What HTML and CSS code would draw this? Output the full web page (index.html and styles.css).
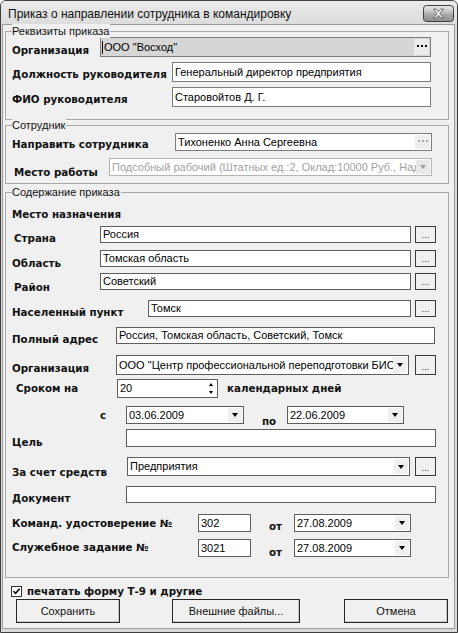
FILE: index.html
```html
<!DOCTYPE html>
<html lang="ru">
<head>
<meta charset="utf-8">
<title>Приказ о направлении сотрудника в командировку</title>
<link rel="stylesheet" href="styles.css">
</head>
<body>
<div class="window">
  <div class="titlebar">
    <span class="title">Приказ о направлении сотрудника в командировку</span>
    <span class="close">
      <svg width="31" height="17" viewBox="0 0 31 17">
        <defs>
          <linearGradient id="cg" x1="0" y1="0" x2="0" y2="1">
            <stop offset="0" stop-color="#ececec"/>
            <stop offset="0.45" stop-color="#bdbdbd"/>
            <stop offset="0.55" stop-color="#a9a9a9"/>
            <stop offset="1" stop-color="#8f8f8f"/>
          </linearGradient>
        </defs>
        <rect x="0.5" y="0.5" width="30" height="16" rx="3" fill="url(#cg)" stroke="#3c3c3c"/>
        <path d="M10.5 4 L13 4 L15.5 6.8 L18 4 L20.5 4 L16.8 8.5 L20.5 13 L18 13 L15.5 10.2 L13 13 L10.5 13 L14.2 8.5 Z" fill="#ffffff" stroke="#4a4a4a" stroke-width="0.8"/>
      </svg>
    </span>
  </div>
  <div class="client">
    <div class="group g1">
      <span class="legend">Реквизиты приказа</span>
      <div class="row h20 mt5">
        <span class="lbl w88 pt7">Организация</span>
        <div class="field readonly fw331"><span class="val">ООО "Восход"</span><span class="inbtn"><svg width="10" height="2" viewBox="0 0 10 2"><rect x="0" y="0" width="2" height="2"/><rect x="4" y="0" width="2" height="2"/><rect x="8" y="0" width="2" height="2"/></svg></span></div>
      </div>
      <div class="row h20 mt5">
        <span class="lbl w160 pt5">Должность руководителя</span>
        <div class="field fw259"><span class="val">Генеральный директор предприятия</span></div>
      </div>
      <div class="row h20 mt5">
        <span class="lbl w160 pt4">ФИО руководителя</span>
        <div class="field fw259"><span class="val">Старовойтов Д. Г.</span></div>
      </div>
    </div>

    <div class="group g2">
      <span class="legend">Сотрудник</span>
      <div class="row h18 mt7">
        <span class="lbl w163 pt5">Направить сотрудника</span>
        <div class="field fw257"><span class="val">Тихоненко Анна Сергеевна</span><span class="inbtn faint"><svg width="10" height="2" viewBox="0 0 10 2"><rect x="0" y="0" width="2" height="2"/><rect x="4" y="0" width="2" height="2"/><rect x="8" y="0" width="2" height="2"/></svg></span></div>
      </div>
      <div class="row h18 mt7">
        <span class="lbl w97 in2 pt10">Место работы</span>
        <div class="field disabled fw323"><span class="val">Подсобный рабочий (Штатных ед.:2, Оклад:10000 Руб., Над</span><span class="arrow"><span class="tri"></span></span></div>
      </div>
    </div>

    <div class="group g3">
      <span class="legend">Содержание приказа</span>
      <div class="row h16 mt13">
        <span class="lbl">Место назначения</span>
      </div>
      <div class="row h17 mt4">
        <span class="lbl w88 in2 pt7">Страна</span>
        <div class="field dark fw311"><span class="val">Россия</span></div>
        <span class="dots ml4">...</span>
      </div>
      <div class="row h17 mt7">
        <span class="lbl w88 pt9">Область</span>
        <div class="field dark fw311"><span class="val">Томская область</span></div>
        <span class="dots ml4">...</span>
      </div>
      <div class="row h17 mt6">
        <span class="lbl w88 in2 pt11">Район</span>
        <div class="field dark fw311"><span class="val">Советский</span></div>
        <span class="dots ml4">...</span>
      </div>
      <div class="row h17 mt10">
        <span class="lbl w136 pt7">Населенный пункт</span>
        <div class="field dark fw263"><span class="val">Томск</span></div>
        <span class="dots ml4">...</span>
      </div>
      <div class="row h17 mt10">
        <span class="lbl w104 pt7">Полный адрес</span>
        <div class="field dark fw319"><span class="val">Россия, Томская область, Советский, Томск</span></div>
      </div>
      <div class="row h20 mt11">
        <span class="lbl w104 pt6">Организация</span>
        <div class="field dark fw293"><span class="val">ООО "Центр профессиональной переподготовки БИС</span><span class="arrow"><span class="tri"></span></span></div>
        <span class="dots ml6">...</span>
      </div>
      <div class="row h19 mt4">
        <span class="lbl w105 in4">Сроком на</span>
        <div class="field dark fw101"><span class="val">20</span><span class="spin"><span class="tri-up"></span><span class="tri-dn"></span></span></div>
        <span class="lbl ml9">календарных дней</span>
      </div>
      <div class="row h18 mt8">
        <span class="lbl lbl-c">с</span>
        <div class="field dark fw118"><span class="val">03.06.2009</span><span class="arrow"><span class="tri"></span></span></div>
        <span class="lbl lbl-mid pt12">по</span>
        <div class="field dark fw117"><span class="val">22.06.2009</span><span class="arrow"><span class="tri"></span></span></div>
      </div>
      <div class="row h18 mt5">
        <span class="lbl w114 pt8">Цель</span>
        <div class="field dark fw310"><span class="val"></span></div>
      </div>
      <div class="row h19 mt10">
        <span class="lbl w115 pt11">За счет средств</span>
        <div class="field dark fw283"><span class="val">Предприятия</span><span class="arrow"><span class="tri"></span></span></div>
        <span class="dots ml5">...</span>
      </div>
      <div class="row h17 mt10">
        <span class="lbl w114 pt7">Документ</span>
        <div class="field dark fw310"><span class="val"></span></div>
      </div>
      <div class="row h18 mt11">
        <span class="lbl w186">Команд. удостоверение №</span>
        <div class="field dark fw53"><span class="val">302</span></div>
        <span class="lbl lbl-mid pt6">от</span>
        <div class="field dark fw117"><span class="val">27.08.2009</span><span class="arrow"><span class="tri"></span></span></div>
      </div>
      <div class="row h18 mt7">
        <span class="lbl w186 pb2">Служебное задание №</span>
        <div class="field dark fw53"><span class="val">3021</span></div>
        <span class="lbl lbl-mid pt8">от</span>
        <div class="field dark fw117"><span class="val">27.08.2009</span><span class="arrow"><span class="tri"></span></span></div>
      </div>
    </div>

    <div class="checkrow">
      <span class="checkbox"><svg width="9" height="9" viewBox="0 0 9 9"><path d="M1.5 4.2 L3.6 6.4 L7.6 1.8" fill="none" stroke="#000" stroke-width="1.6"/></svg></span>
      <span class="lbl">печатать форму Т-9 и другие</span>
    </div>

    <div class="buttons">
      <span class="btn bw104">Сохранить</span>
      <span class="btn bw128 gap52">Внешние файлы...</span>
      <span class="btn bw104 gap44">Отмена</span>
    </div>
  </div>
</div>
</body>
</html>
```

FILE: styles.css
```css
* { box-sizing: border-box; }
html, body { margin: 0; padding: 0; }
body {
  background: #ffffff;
  font-family: "Liberation Sans", Arial, sans-serif;
  font-size: 11px;
  color: #000;
}

.window {
  width: 458px;
  height: 633px;
  border: 1px solid #3f3f3f;
  border-radius: 6px 6px 0 0;
  background: #d8d8d8;
  display: flex;
  flex-direction: column;
  overflow: hidden;
}

.titlebar {
  height: 23px;
  flex: none;
  display: flex;
  align-items: center;
  padding: 0 3px 0 7px;
  background: linear-gradient(#ebebeb, #dcdcdc);
}
.title {
  flex: 1;
  font-size: 12px;
  color: #111;
  padding-top: 2px;
}
.close { display: flex; margin-top: 1px; }

.client {
  flex: 1;
  margin: 0 2px 3px 1px;
  background: #f0f0f0;
  border: 1px solid #9c9c9c;
  display: flex;
  flex-direction: column;
}

.group {
  position: relative;
  width: 444px;
  margin-left: 2px;
  border: 1px solid #a7a7a7;
  padding-left: 6px;
}
.g1 { margin-top: 6px; padding-bottom: 12px; }
.g2 { margin-top: 5px; padding-bottom: 7px; }
.g3 { margin-top: 8px; padding-bottom: 20px; }

.legend {
  position: absolute;
  top: -8px;
  left: 6px;
  line-height: 14px;
  font-size: 11px;
  background: #f0f0f0;
  padding-right: 1px;
  color: #111;
}

.row { display: flex; align-items: center; }
.h16 { height: 16px; }
.h17 { height: 17px; }
.h18 { height: 18px; }
.h19 { height: 19px; }
.h20 { height: 20px; }
.mt4 { margin-top: 4px; }
.mt5 { margin-top: 5px; }
.mt6 { margin-top: 6px; }
.mt7 { margin-top: 7px; }
.mt8 { margin-top: 8px; }
.mt10 { margin-top: 10px; }
.mt11 { margin-top: 11px; }
.mt13 { margin-top: 13px; }

.lbl {
  flex: none;
  font-family: "DejaVu Sans", Verdana, sans-serif;
  font-weight: bold;
  font-size: 10.3px;
  line-height: 13px;
  white-space: nowrap;
  color: #111;
}
.w88 { width: 88px; }
.w97 { width: 97px; }
.w104 { width: 104px; }
.w105 { width: 105px; }
.w114 { width: 114px; }
.w115 { width: 115px; }
.w136 { width: 136px; }
.w160 { width: 160px; }
.w163 { width: 163px; }
.w186 { width: 186px; }
.in2 { padding-left: 2px; }
.in4 { padding-left: 4px; }
.pt4 { padding-top: 4px; }
.pt5 { padding-top: 5px; }
.pt6 { padding-top: 6px; }
.pt7 { padding-top: 7px; }
.pt8 { padding-top: 8px; }
.pt9 { padding-top: 9px; }
.pt10 { padding-top: 10px; }
.pt11 { padding-top: 11px; }
.pt12 { padding-top: 12px; }
.pb2 { padding-bottom: 2px; }
.ml4 { margin-left: 4px; }
.ml5 { margin-left: 5px; }
.ml6 { margin-left: 6px; }
.ml9 { margin-left: 9px; }
.lbl-c { width: 114px; padding-left: 88px; }
.lbl-mid { width: 43px; padding-left: 18px; }

.field {
  flex: none;
  height: 100%;
  display: flex;
  align-items: center;
  border: 1px solid #7c7c7c;
  background: #ffffff;
  padding-left: 2px;
  font-size: 11px;
  white-space: nowrap;
  overflow: hidden;
}
.field.dark { border-color: #5e5e5e; }
.field.readonly { background: #d6d6d6; padding-left: 1px; }
.field.readonly .val { border-left: 1px solid #000; padding-left: 1px; }
.field.disabled { border-color: #b4b4b4; color: #a2a2a2; }
.val {
  flex: 1;
  overflow: hidden;
  padding-bottom: 1px;
}

.fw53 { width: 53px; }
.fw101 { width: 101px; }
.fw117 { width: 117px; }
.fw118 { width: 118px; }
.fw257 { width: 257px; }
.fw259 { width: 259px; }
.fw263 { width: 263px; }
.fw283 { width: 283px; }
.fw293 { width: 293px; }
.fw310 { width: 310px; }
.fw311 { width: 311px; }
.fw319 { width: 319px; }
.fw323 { width: 323px; }
.fw331 { width: 331px; }

.inbtn {
  flex: none;
  width: 15px;
  align-self: stretch;
  margin: 1px 1px 1px 0;
  background: #ebebeb;
  display: flex;
  align-items: center;
  justify-content: center;
  padding-bottom: 3px;
}
.inbtn svg { fill: #000; }
.inbtn.faint { background: #eeeeee; }
.inbtn.faint svg { fill: #a8a8a8; }

.arrow {
  flex: none;
  width: 14px;
  align-self: stretch;
  margin: 1px 1px 1px 0;
  background: #f0f0f0;
  display: flex;
  align-items: center;
  justify-content: center;
}
.tri {
  width: 0;
  height: 0;
  border-left: 3.5px solid transparent;
  border-right: 3.5px solid transparent;
  border-top: 4px solid #000;
}
.disabled .arrow { background: #e8e8e8; }
.disabled .tri { border-top-color: #a0a0a0; }

.spin {
  flex: none;
  width: 13px;
  align-self: stretch;
  display: flex;
  flex-direction: column;
  align-items: center;
  justify-content: center;
  gap: 5px;
}
.tri-up {
  width: 0; height: 0;
  border-left: 2.5px solid transparent;
  border-right: 2.5px solid transparent;
  border-bottom: 3px solid #000;
}
.tri-dn {
  width: 0; height: 0;
  border-left: 2.5px solid transparent;
  border-right: 2.5px solid transparent;
  border-top: 3px solid #000;
}

.dots {
  flex: none;
  width: 21px;
  height: 100%;
  border: 1px solid #3a3a3a;
  background: #f0f0f0;
  display: flex;
  align-items: flex-end;
  justify-content: center;
  font-size: 9px;
  line-height: 9px;
  padding-bottom: 2px;
  color: #333;
}

.checkrow {
  display: flex;
  align-items: center;
  height: 13px;
  margin-top: 7px;
  padding-left: 8px;
}
.checkbox {
  width: 11px;
  height: 11px;
  border: 1px solid #333;
  background: #fff;
  display: flex;
  align-items: center;
  justify-content: center;
  margin-right: 5px;
}

.buttons {
  display: flex;
  margin-top: 1px;
  padding-left: 13px;
}
.btn {
  height: 24px;
  display: flex;
  align-items: center;
  justify-content: center;
  border: 1px solid #262626;
  background: #f0f0f0;
  box-shadow: inset -1px -1px 0 #c8c8c8;
  font-size: 11px;
  color: #111;
}
.bw104 { width: 104px; }
.bw128 { width: 128px; }
.gap52 { margin-left: 52px; }
.gap44 { margin-left: 44px; }
```
